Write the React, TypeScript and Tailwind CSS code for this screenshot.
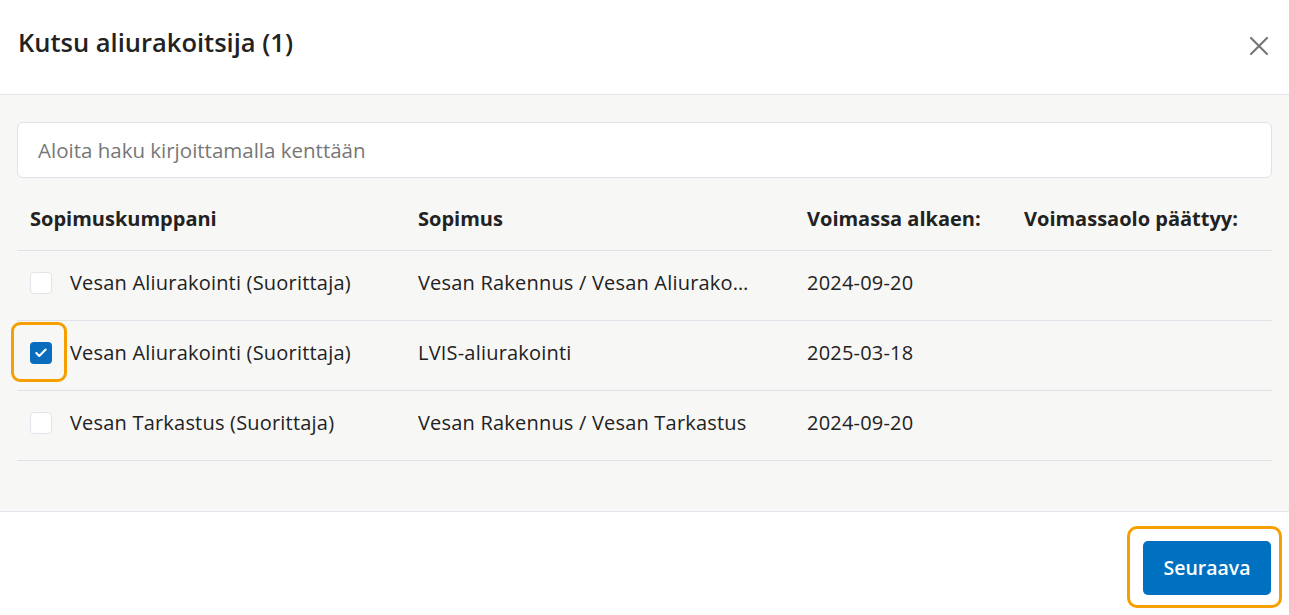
import { X, Check } from "lucide-react";

const rows = [
  { name: "Vesan Aliurakointi (Suorittaja)", contract: "Vesan Rakennus / Vesan Aliurakointi", start: "2024-09-20", end: "", checked: false },
  { name: "Vesan Aliurakointi (Suorittaja)", contract: "LVIS-aliurakointi", start: "2025-03-18", end: "", checked: true },
  { name: "Vesan Tarkastus (Suorittaja)", contract: "Vesan Rakennus / Vesan Tarkastus", start: "2024-09-20", end: "", checked: false },
];

const grid = "grid grid-cols-[388px_389px_217px_1fr] items-center";

export default function App() {
  return (
    <div className="w-[1289px] h-[615px] flex flex-col bg-white text-[#222] font-['Open_Sans','Liberation_Sans',sans-serif]">
      <header className="h-[95px] shrink-0 flex items-center justify-between pl-[18px] pr-[14px] border-b border-[#e3e6ea]">
        <h1 className="text-[25.5px] font-semibold pb-[10px]">Kutsu aliurakoitsija (1)</h1>
        <button className="text-[#777] pb-[2px]">
          <X className="w-[32px] h-[32px]" strokeWidth={1.6} />
        </button>
      </header>

      <main className="flex-1 bg-[#f7f7f6] px-[17px] pt-[27px] border-b border-[#e3e6ea]">
        <div className="h-[56px] bg-white border border-[#dfe2e7] rounded-[6px] flex items-center px-[20px] text-[20.5px] text-[#777]">
          Aloita haku kirjoittamalla kenttään
        </div>

        <div className={`${grid} h-[73px] pt-[10px] border-b border-[#dfe3e8] text-[20px] font-bold`}>
          <div className="pl-[13px]">Sopimuskumppani</div>
          <div className="pl-[13px]">Sopimus</div>
          <div className="pl-[13px]">Voimassa alkaen:</div>
          <div className="pl-[13px]">Voimassaolo päättyy:</div>
        </div>

        {rows.map((r, i) => (
          <div key={i} className={`${grid} h-[70px] pb-[5px] border-b border-[#dfe3e8] text-[20px] tracking-[0.2px]`}>
            <div className="pl-[13px] flex items-center gap-[18px]">
              <span className="relative flex">
                {r.checked ? (
                  <span className="w-[22px] h-[22px] rounded-[4px] bg-[#0a6cbd] flex items-center justify-center">
                    <Check className="w-[14px] h-[14px] text-white" strokeWidth={3.5} />
                  </span>
                ) : (
                  <span className="w-[22px] h-[22px] rounded-[4px] bg-white border border-[#e1e4e8]" />
                )}
                {r.checked && (
                  <span className="absolute -left-[19px] -top-[20px] w-[56px] h-[60px] border-[3px] border-[#f5a000] rounded-[9px]" />
                )}
              </span>
              <span>{r.name}</span>
            </div>
            <div className="pl-[13px]">
              <div className="max-w-[333px] truncate">{r.contract}</div>
            </div>
            <div className="pl-[13px]">{r.start}</div>
            <div className="pl-[13px]">{r.end}</div>
          </div>
        ))}
      </main>

      <footer className="h-[103px] shrink-0 flex items-center justify-end pr-[18px]">
        <div className="relative">
          <button className="w-[128px] h-[54px] rounded-[5px] bg-[#0070c0] text-white text-[19.5px] font-semibold mt-[8px]">
            Seuraava
          </button>
          <span className="absolute -left-[16px] -top-[7px] -right-[11px] -bottom-[13px] border-[3px] border-[#f5a000] rounded-[10px]" />
        </div>
      </footer>
    </div>
  );
}
